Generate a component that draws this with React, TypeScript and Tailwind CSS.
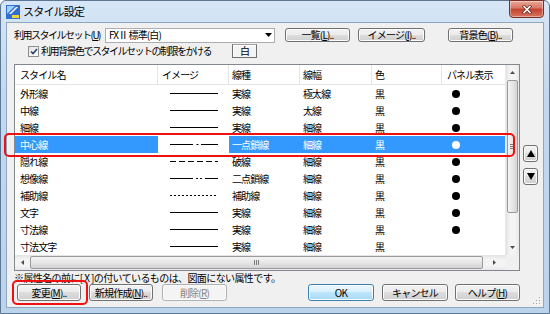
import React from 'react';

type LineKind = 'solid' | 'chain' | 'dash' | 'chain2' | 'dot';

interface Row {
  name: string;
  line: LineKind;
  type: string;
  width: string;
  dot: boolean;
}

const rows: Row[] = [
  { name: '外形線', line: 'solid', type: '実線', width: '極太線', dot: true },
  { name: '中線', line: 'solid', type: '実線', width: '太線', dot: true },
  { name: '細線', line: 'solid', type: '実線', width: '細線', dot: true },
  { name: '中心線', line: 'chain', type: '一点鎖線', width: '細線', dot: true },
  { name: '隠れ線', line: 'dash', type: '破線', width: '細線', dot: true },
  { name: '想像線', line: 'chain2', type: '二点鎖線', width: '細線', dot: true },
  { name: '補助線', line: 'dot', type: '補助線', width: '細線', dot: true },
  { name: '文字', line: 'solid', type: '実線', width: '細線', dot: true },
  { name: '寸法線', line: 'solid', type: '実線', width: '細線', dot: true },
  { name: '寸法文字', line: 'solid', type: '実線', width: '細線', dot: false },
];

const SELECTED = 3;

const LineImg: React.FC<{ kind: LineKind }> = ({ kind }) => (
  <svg width="48" height="3" viewBox="0 0 48 3" className="block">
    {kind === 'solid' && <line x1="0" y1="1.5" x2="48" y2="1.5" stroke="#000" strokeWidth="1" />}
    {kind === 'chain' && (
      <g stroke="#000" strokeWidth="1">
        <line x1="0" y1="1.5" x2="23" y2="1.5" />
        <line x1="26.5" y1="1.5" x2="28.5" y2="1.5" />
        <line x1="31" y1="1.5" x2="48" y2="1.5" />
      </g>
    )}
    {kind === 'dash' && (
      <line x1="0" y1="1.5" x2="48" y2="1.5" stroke="#000" strokeWidth="1" strokeDasharray="6 3" />
    )}
    {kind === 'chain2' && (
      <g stroke="#000" strokeWidth="1">
        <line x1="0" y1="1.5" x2="23" y2="1.5" />
        <line x1="26" y1="1.5" x2="28" y2="1.5" />
        <line x1="30" y1="1.5" x2="32" y2="1.5" />
        <line x1="35" y1="1.5" x2="48" y2="1.5" />
      </g>
    )}
    {kind === 'dot' && (
      <line x1="0" y1="1.5" x2="48" y2="1.5" stroke="#000" strokeWidth="1" strokeDasharray="2 2" />
    )}
  </svg>
);

const btnBase =
  'flex items-center justify-center rounded-[3px] border text-[10px] leading-none tracking-[-0.8px] whitespace-nowrap shadow-[inset_0_0_0_1px_#fcfcfc]';
const btnNormal =
  'border-[#707070] bg-[linear-gradient(#f2f2f2,#ebebeb_49%,#dddddd_50%,#cfcfcf)] text-black';

const Btn: React.FC<{ className?: string; children: React.ReactNode }> = ({ className = '', children }) => (
  <div className={`${btnBase} ${btnNormal} ${className}`}>{children}</div>
);

export default function App() {
  return (
    <div className="relative w-[550px] h-[314px] overflow-hidden font-['Noto_Sans_CJK_JP',sans-serif] text-black">
      <div className="flex flex-col w-full h-full rounded-t-[6px] border border-[#5d7894] bg-[linear-gradient(#d6e6f6,#c3d8ef_30%,#bcd3ec)]">
        {/* title bar */}
        <div className="flex h-[21px] shrink-0">
          <div className="flex items-center pl-[5px] gap-[3px]">
            <svg width="14" height="14" viewBox="0 0 14 14">
              <rect x="0" y="0" width="14" height="14" fill="#2f6fcf" />
              <path d="M1 1 L9 1 L1 9 Z" fill="#9fd0ff" />
              <path d="M10 2 L12 2 L5 9 L3 9 Z" fill="#ffffff" />
              <rect x="6" y="10" width="7" height="3" fill="#f5d23a" />
            </svg>
            <span className="text-[11px] tracking-[-0.8px] leading-none text-black">スタイル設定</span>
          </div>
          <div className="ml-auto mr-[5px] mt-[-1px] w-[35px] h-[18px] rounded-b-[4px] border border-[#7a2e25] bg-[linear-gradient(#eaa898,#d87565_45%,#c2412c_50%,#d7755f)] flex items-center justify-center shadow-[inset_0_0_0_1px_rgba(255,255,255,0.4)]">
            <svg width="10" height="9" viewBox="0 0 10 9">
              <g stroke="#5a1a12" strokeWidth="3" strokeLinecap="square">
                <line x1="2" y1="1.5" x2="8" y2="7.5" />
                <line x1="8" y1="1.5" x2="2" y2="7.5" />
              </g>
              <g stroke="#fff" strokeWidth="1.6" strokeLinecap="square">
                <line x1="2" y1="1.5" x2="8" y2="7.5" />
                <line x1="8" y1="1.5" x2="2" y2="7.5" />
              </g>
            </svg>
          </div>
        </div>

        {/* client area */}
        <div className="relative mx-[5px] h-[286px] border border-[#8fa6bf] bg-[#f0f0f0] flex flex-col text-[10px] leading-none tracking-[-0.9px]">
          {/* row 1 */}
          <div className="flex items-center h-[14px] mt-[5px]">
            <div className="w-[98px] pl-[7px] whitespace-nowrap tracking-[-1.5px]">
              利用スタイルセット(<u>U</u>)
            </div>
            <div className="w-[170px] h-[15px] border border-[#abadb3] bg-white flex items-center pl-[3px]">
              <span className="whitespace-nowrap">FXⅡ 標準(白)</span>
              <svg width="7" height="4" viewBox="0 0 7 4" className="ml-auto mr-[2px]">
                <path d="M0 0 L7 0 L3.5 4 Z" fill="#000" />
              </svg>
            </div>
            <Btn className="ml-[10px] w-[65px] h-[14px]">
              一覧(<u>L</u>)..
            </Btn>
            <Btn className="ml-[8px] w-[67px] h-[14px]">
              イメージ(<u>I</u>)..
            </Btn>
            <Btn className="ml-[23px] w-[65px] h-[14px]">
              背景色(<u>B</u>)..
            </Btn>
          </div>

          {/* row 2 */}
          <div className="flex items-center h-[14px] mt-[2px]">
            <div className="ml-[21px] w-[11px] h-[11px] border border-[#8e8f8f] bg-[linear-gradient(135deg,#e4e4e4,#ffffff)] flex items-center justify-center">
              <svg width="8" height="7" viewBox="0 0 8 7">
                <path d="M1 3.5 L3 5.5 L7 1" stroke="#2a3f6b" strokeWidth="1.6" fill="none" />
              </svg>
            </div>
            <span className="ml-[2px] whitespace-nowrap tracking-[-1.5px]">利用背景色でスタイルセットの制限をかける</span>
            <div className="ml-auto mr-[286px] w-[25px] h-[14px] border border-[#707070] border-t-[#a0a0a0] bg-[#f4f4f4] flex items-center justify-center shadow-[inset_1px_1px_0_#ffffff]">
              白
            </div>
          </div>

          {/* list + side buttons */}
          <div className="flex mt-[6px]">
            <div className="ml-[7px] w-[506px] h-[207px] border border-[#828790] bg-white flex flex-col">
              <div className="flex h-[190px]">
                <div className="flex-1 flex flex-col overflow-hidden">
                  {/* header */}
                  <div className="flex h-[20px] border-b border-[#e5e5e5] shrink-0">
                    <div className="w-[143px] pl-[5px] flex items-center border-r border-[#e5e5e5]">スタイル名</div>
                    <div className="w-[71px] pl-[4px] flex items-center border-r border-[#e5e5e5]">イメージ</div>
                    <div className="w-[71px] pl-[3px] flex items-center border-r border-[#e5e5e5]">線種</div>
                    <div className="w-[72px] pl-[3px] flex items-center border-r border-[#e5e5e5]">線幅</div>
                    <div className="w-[70px] pl-[3px] flex items-center border-r border-[#e5e5e5]">色</div>
                    <div className="flex-1 pl-[5px] flex items-center whitespace-nowrap">パネル表示</div>
                  </div>
                  {rows.map((r, i) => {
                    const sel = i === SELECTED;
                    return (
                      <div
                        key={r.name}
                        className={`flex h-[17px] shrink-0 ${sel ? 'bg-[#3399ff] text-white' : ''}`}
                      >
                        <div className="w-[143px] pl-[5px] flex items-center">{r.name}</div>
                        <div className={`w-[71px] flex items-center justify-center ${sel ? 'bg-white' : ''}`}>
                          <LineImg kind={r.line} />
                        </div>
                        <div className="w-[71px] pl-[3px] flex items-center">{r.type}</div>
                        <div className="w-[72px] pl-[3px] flex items-center">{r.width}</div>
                        <div className="w-[70px] pl-[3px] flex items-center">黒</div>
                        <div className="flex-1 pl-[10px] flex items-center">
                          {r.dot && (
                            <div className={`w-[8px] h-[8px] rounded-full ${sel ? 'bg-white' : 'bg-black'}`} />
                          )}
                        </div>
                      </div>
                    );
                  })}
                </div>
                {/* vertical scrollbar */}
                <div className="w-[14px] flex flex-col bg-[linear-gradient(90deg,#e3e3e3,#f4f4f4_30%,#f4f4f4_70%,#e8e8e8)] border-l border-[#e9e9e9]">
                  <div className="h-[15px] flex items-center justify-center">
                    <svg width="5" height="3" viewBox="0 0 5 3">
                      <path d="M0 3 L5 3 L2.5 0 Z" fill="#4d4d4d" />
                    </svg>
                  </div>
                  <div className="mx-[1px] h-[133px] rounded-[2px] border border-[#9a9a9a] bg-[linear-gradient(90deg,#f4f4f4,#e6e6e6_50%,#d4d4d4)] flex items-center justify-center">
                    <div className="flex flex-col gap-[1px]">
                      <div className="w-[5px] h-[1px] bg-[#7a7a7a]" />
                      <div className="w-[5px] h-[1px] bg-[#7a7a7a]" />
                      <div className="w-[5px] h-[1px] bg-[#7a7a7a]" />
                    </div>
                  </div>
                  <div className="mt-auto h-[15px] flex items-center justify-center">
                    <svg width="5" height="3" viewBox="0 0 5 3">
                      <path d="M0 0 L5 0 L2.5 3 Z" fill="#4d4d4d" />
                    </svg>
                  </div>
                </div>
              </div>
              {/* horizontal scrollbar */}
              <div className="flex h-[15px] mt-auto">
                <div className="flex-1 flex items-center bg-[linear-gradient(#e3e3e3,#f4f4f4_30%,#f4f4f4_70%,#e8e8e8)]">
                  <div className="w-[15px] flex items-center justify-center">
                    <svg width="3" height="5" viewBox="0 0 3 5">
                      <path d="M3 0 L3 5 L0 2.5 Z" fill="#4d4d4d" />
                    </svg>
                  </div>
                  <div className="w-[453px] h-[13px] rounded-[2px] border border-[#9a9a9a] bg-[linear-gradient(#f4f4f4,#e6e6e6_50%,#d4d4d4)] flex items-center justify-center gap-[1px]">
                    <div className="w-[1px] h-[5px] bg-[#7a7a7a]" />
                    <div className="w-[1px] h-[5px] bg-[#7a7a7a]" />
                    <div className="w-[1px] h-[5px] bg-[#7a7a7a]" />
                  </div>
                  <div className="flex-1 flex items-center justify-center">
                    <svg width="3" height="5" viewBox="0 0 3 5">
                      <path d="M0 0 L0 5 L3 2.5 Z" fill="#4d4d4d" />
                    </svg>
                  </div>
                </div>
                <div className="w-[14px] bg-[#f0f0f0]" />
              </div>
            </div>

            {/* up / down buttons */}
            <div className="ml-[3px] flex flex-col pt-[81px] gap-[6px]">
              <Btn className="w-[15px] h-[17px]">
                <svg width="8" height="7" viewBox="0 0 8 7">
                  <path d="M0 7 L8 7 L4 0 Z" fill="#000" />
                </svg>
              </Btn>
              <Btn className="w-[15px] h-[17px]">
                <svg width="8" height="7" viewBox="0 0 8 7">
                  <path d="M0 0 L8 0 L4 7 Z" fill="#000" />
                </svg>
              </Btn>
            </div>
          </div>

          {/* note */}
          <div className="h-[11px] mt-[1px] pl-[7px] flex items-center whitespace-nowrap tracking-[-0.6px]">
            ※属性名の前に[ X ]の付いているものは、図面にない属性です。
          </div>

          {/* bottom buttons */}
          <div className="flex h-[17px] mt-[1px]">
            <Btn className="ml-[10px] w-[64px]">
              変更(<u>M</u>)..
            </Btn>
            <Btn className="ml-[8px] w-[64px]">
              新規作成(<u>N</u>)..
            </Btn>
            <div className={`${btnBase} ml-[9px] w-[65px] border-[#adb2b5] bg-[#f4f4f4] text-[#838383]`}>
              削除(<u>R</u>)
            </div>
            <div
              className={`${btnBase} ml-[81px] w-[66px] border-[#3c7fb1] bg-[linear-gradient(#eaf6fd,#d9f0fc_49%,#bee6fd_50%,#a7d9f5)] shadow-[inset_0_0_0_1px_#c6e9fc]`}
            >
              OK
            </div>
            <Btn className="ml-[8px] w-[66px]">キャンセル</Btn>
            <Btn className="ml-[7px] w-[65px]">
              ヘルプ(<u>H</u>)
            </Btn>
          </div>

          {/* resize grip */}
          <svg width="10" height="10" viewBox="0 0 10 10" className="absolute right-[1px] bottom-[1px]">
            {[
              [8, 2],
              [8, 5],
              [5, 5],
              [8, 8],
              [5, 8],
              [2, 8],
            ].map(([x, y]) => (
              <g key={`${x}-${y}`}>
                <rect x={x} y={y} width="1" height="1" fill="#ffffff" />
                <rect x={x - 1} y={y - 1} width="1" height="1" fill="#a0a0a0" />
              </g>
            ))}
          </svg>
        </div>
      </div>

      {/* red annotations */}
      <div className="absolute left-[4px] top-[133px] w-[511px] h-[24px] rounded-[5px] border-2 border-[#ee1111]" />
      <div className="absolute left-[12px] top-[280px] w-[76px] h-[25px] rounded-[5px] border-2 border-[#ee1111]" />
    </div>
  );
}
